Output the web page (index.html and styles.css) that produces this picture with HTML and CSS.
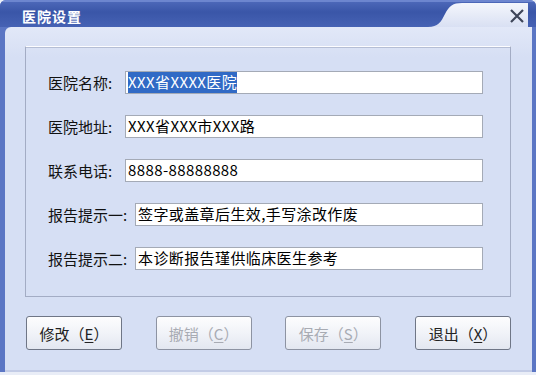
FILE: index.html
```html
<!DOCTYPE html>
<html>
<head>
	<meta charset="utf-8">
	<title>医院设置</title>
	<link rel="stylesheet" href="styles.css">
</head>
<body>
<div class="window">
	<!--========== TITLE BAR =============-->
	<div class="title__bar">
		<span class="title__text">医院设置</span>
		<div class="title__cap">
			<svg width="104" height="27" viewBox="0 0 104 27">
				<defs>
					<linearGradient id="capGrad" x1="0" y1="0" x2="0" y2="1">
						<stop offset="0" stop-color="#f4f6fc"/>
						<stop offset="1" stop-color="#d9e0f3"/>
					</linearGradient>
				</defs>
				<path d="M0 27 C 10 27, 13 22, 17 14 C 21 6, 25 3, 34 3 L 100 3 L 100 27 Z" fill="url(#capGrad)"/>
				<path d="M83 10 L95 22 M95 10 L83 22" stroke="#3e4559" stroke-width="2.2" fill="none"/>
			</svg>
		</div>
	</div>

	<!--========== WINDOW BODY =============-->
	<div class="window__body">
		<div class="group__box">
			<div class="form__row">
				<label class="row__label">医院名称:</label>
				<div class="row__input"><span class="selected">XXX省XXXX医院</span></div>
			</div>
			<div class="form__row">
				<label class="row__label">医院地址:</label>
				<div class="row__input">XXX省XXX市XXX路</div>
			</div>
			<div class="form__row">
				<label class="row__label">联系电话:</label>
				<div class="row__input">8888-88888888</div>
			</div>
			<div class="form__row">
				<label class="row__label">报告提示一:</label>
				<div class="row__input">签字或盖章后生效,手写涂改作废</div>
			</div>
			<div class="form__row">
				<label class="row__label">报告提示二:</label>
				<div class="row__input">本诊断报告瑾供临床医生参考</div>
			</div>
		</div>

		<!--========== BUTTONS =============-->
		<div class="button__row">
			<button class="win__btn">修改（<u>E</u>）</button>
			<button class="win__btn btn__disabled">撤销（<u>C</u>）</button>
			<button class="win__btn btn__disabled">保存（<u>S</u>）</button>
			<button class="win__btn">退出（<u>X</u>）</button>
		</div>
	</div>
</div>
</body>
</html>
```

FILE: styles.css
```css
*{
	margin: 0;
	padding: 0;
	box-sizing: border-box;
}

body{
	background-color: #eef1f8;
	font-family: "Noto Sans CJK SC", sans-serif;
}

.window{
	width: 536px;
	height: 375px;
	display: flex;
	flex-direction: column;
	background-color: #5b76c4;
	border-radius: 6px 6px 0 0;
	overflow: hidden;
	border-bottom: 3px solid #e9edf7;
}

/*========= TITLE BAR ================*/
.title__bar{
	height: 27px;
	display: flex;
	align-items: center;
	justify-content: space-between;
	background: linear-gradient(#4c67b8, #3a56a8 40%, #4662b4);
	border-top: 2px solid #6d86cf;
}

.title__text{
	color: #fff;
	font-weight: bold;
	font-size: 14px;
	margin-left: 22px;
	letter-spacing: 1px;
	margin-top: 2px;
}

.title__cap{
	display: flex;
	align-self: flex-end;
	margin-right: 4px;
}

.title__cap svg{
	display: block;
}

/*========= BODY ================*/
.window__body{
	flex: 1;
	margin: 0 4px 0 5px;
	background: linear-gradient(#e2e8f8, #d6dff4 30px, #d6dff4);
	border-radius: 6px 0 0 0;
	padding: 19px 21px 0 20px;
	border-bottom: 2px solid #c3cce6;
}

.group__box{
	height: 251px;
	border: 1px solid #a3acc4;
	border-top-color: #fdfdff;
	box-shadow: inset 0 1px 0 #b5bed5;
	padding: 24px 27px 0 22px;
	display: flex;
	flex-direction: column;
	gap: 21px;
}

.form__row{
	display: flex;
	align-items: center;
	height: 23px;
}

.row__label{
	font-size: 15px;
	color: #111;
	width: 77px;
	white-space: nowrap;
}

.form__row:nth-child(n+4) .row__label{
	width: 87px;
}

.row__input{
	flex: 1;
	height: 23px;
	background-color: #fff;
	border: 1px solid #a4aab6;
	font-size: 15px;
	line-height: 20px;
	padding-left: 2px;
	color: #000;
	white-space: nowrap;
	overflow: hidden;
	letter-spacing: 0.4px;
}

.selected{
	background-color: #316ac5;
	color: #fff;
	padding: 1px 0;
}

/*========= BUTTONS ================*/
.button__row{
	display: flex;
	justify-content: space-between;
	padding: 0 0 0 1px;
	margin-top: 19px;
}

.win__btn{
	width: 96px;
	height: 34px;
	border: 1px solid #6f7686;
	border-radius: 3px;
	background: linear-gradient(#fdfdfe, #f1f3f8 50%, #e3e7f0);
	font-family: "Noto Sans CJK SC", sans-serif;
	font-size: 15px;
	color: #222;
}

.win__btn u{
	text-underline-offset: 2px;
}

.btn__disabled{
	color: #a8abb3;
	border-color: #8d93a2;
}
```
